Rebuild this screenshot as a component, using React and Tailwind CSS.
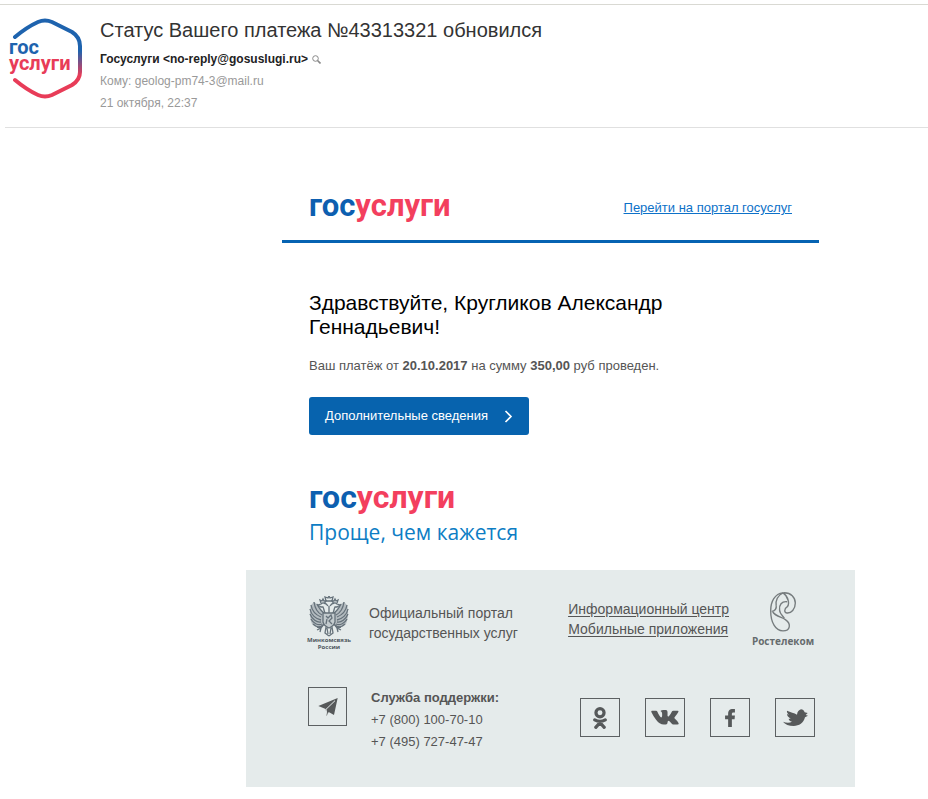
function OkIcon() {
  return (
    <svg width="14" height="22" viewBox="0 0 41 65" fill="none" stroke="#56595a" strokeWidth="9.5" strokeLinecap="round" strokeLinejoin="round">
      <circle cx="20.5" cy="17" r="12" />
      <path d="M5 38 Q20.5 47 36 38 M8 60 L20.5 46 L33 60" />
    </svg>
  );
}

function VkIcon() {
  return (
    <svg width="28" height="15" viewBox="0 0 83 44" fill="#56595a">
      <path d="M3 2 H15 Q18 2 19 5 Q25 19 30 22 Q33 22 33 17 V10 Q33 5 28 3 Q31 0 37 0 H45 Q49 1 49 6 V17 Q50 21 53 18 Q59 11 62 4 Q63 2 66 2 H79 Q83 2 81 6 Q78 12 70 21 Q68 23 71 26 Q80 34 82 39 Q83 43 78 43 H66 Q63 43 61 40 Q55 33 52 32 Q49 32 49 37 Q49 43 44 43 H38 Q25 43 15 29 Q6 17 1 6 Q0 2 3 2 Z" />
    </svg>
  );
}

function FacebookIcon() {
  return (
    <svg width="10" height="18" viewBox="0 0 29 53" fill="#56595a">
      <path d="M9 53 V30 H0 V19 H9 V14 C9 4 15 0 22 0 H29 V10 H25 C21 10 20 12 20 15 V19 H29 L28 30 H20 V53 Z" />
    </svg>
  );
}

function TwitterIcon() {
  return (
    <svg width="25" height="17" viewBox="0 0 75 51" fill="#56595a">
      <path d="M54 1 C59 1 63 5 65 10 L74 12 L68 18 L75 20 L66 25 C62 42 48 51 32 51 C18 51 6 46 0 38 C10 42 20 42 27 38 C20 36 17 32 17 29 L23 29 C16 25 12 20 12 15 L18 17 C13 13 11 8 12 5 C22 9 34 12 42 17 C43 8 48 3 54 1 Z" />
    </svg>
  );
}

const socials = [
  { name: "Одноклассники", Icon: OkIcon },
  { name: "ВКонтакте", Icon: VkIcon },
  { name: "Facebook", Icon: FacebookIcon },
  { name: "Twitter", Icon: TwitterIcon },
];

function Avatar() {
  return (
    <div className="relative shrink-0 font-[Roboto,sans-serif] text-xl leading-4 font-bold">
      <svg width="76" height="82" viewBox="0 0 76 82">
        <defs>
          <linearGradient id="ring" x1="0" y1="0" x2="0" y2="82" gradientUnits="userSpaceOnUse">
            <stop offset="0.4" stopColor="#1e63ae" />
            <stop offset="0.7" stopColor="#e83c58" />
          </linearGradient>
        </defs>
        <path
          d="M6 19 Q18 9 29 4 Q36 1 43 4 L63 14 Q71 19 71 28 V54 Q71 62 63 67 L43 77 Q36 80 29 77 Q18 72 6 62"
          fill="none"
          stroke="url(#ring)"
          strokeWidth="4"
          strokeLinecap="round"
        />
      </svg>
      <div className="absolute top-[21px] left-0">
        <div className="text-[#1e63ae]">гос</div>
        <div className="text-[#e83c58]">услуги</div>
      </div>
    </div>
  );
}

function Logo({ className }) {
  return (
    <div className={`font-[Roboto,sans-serif] font-bold text-[#0d5fb0] ${className}`}>
      гос<span className="text-[#f33f5e]">услуги</span>
    </div>
  );
}

function EagleHalf() {
  return (
    <g>
      <path d="M8 8 C11 12 14 15 16 18 L15 28 C11 31 6 31 3 28 C1 23 0 16 2 9 L5 6 Z" fill="#b4bcc0" stroke="none" />
      <path d="M19 10 C17 7 14 6 12 8 L9 9 L12 11 L14 11 C15 13 15 15 16 17 L19 18" />
      <path d="M15 17 C12 15 10 12 8 8 M13 19 C9 17 6 13 5 6 M12 21 C7 19 3 15 2 9 M12 24 C7 23 2 19 1 13 M12 26 C8 27 3 23 1 18 M13 28 C9 30 4 27 2 23 M14 29 C11 32 7 31 4 28" />
      <path d="M15 28 L12 32 L8 34 M12 32 L11 36 M12 32 L8 31 M17 31 L16 37 L20 40 M18 32 L19 38 M12 7 L11 4 L13 5 L14 3 L15 5 L17 5 L15 8" />
    </g>
  );
}

function Emblem() {
  return (
    <div className="w-11 shrink-0 text-center font-['Open_Sans',sans-serif] text-[6px] leading-[7px] font-bold text-[#4f585f]">
      <svg width="42" height="41" viewBox="0 0 40 41" fill="none" stroke="#65717a" strokeWidth="1.3" className="mx-auto">
        <EagleHalf />
        <g transform="translate(40 0) scale(-1 1)">
          <EagleHalf />
        </g>
        <path d="M17 5 L16 1 L19 2 L20 0 L21 2 L24 1 L23 5 Z" />
        <path d="M14 17 H26 V26 Q25 30 20 32 Q15 30 14 26 Z" fill="#c3cbce" />
        <path d="M17 20 L19 22 L22 19 L23 22 L20 25 L23 28 M18 23 L17 28 M20 10 V17" />
      </svg>
      <div>Минкомсвязь</div>
      <div>России</div>
    </div>
  );
}

function Rostelecom() {
  return (
    <div className="w-16 text-center font-['Open_Sans',sans-serif] text-[10px] leading-3 font-bold text-[#666c6e]">
      <svg width="26" height="40" viewBox="0 0 76 116" fill="none" stroke="#767c7e" strokeWidth="4" className="mx-auto mb-[3px]">
        <path d="M38 2 C14 4 2 28 2 54 C2 88 16 113 38 113 C60 113 62 92 46 81 C34 72 18 72 8 58" />
        <path d="M38 2 C62 0 74 16 74 32 C74 50 62 62 50 61 C40 60 42 48 50 43 C58 36 54 12 38 2" />
        <path d="M38 2 C22 8 16 26 18 38 C20 48 14 56 5 56" />
        <path d="M50 28 C34 26 26 38 28 52 C28 62 36 68 42 76" />
      </svg>
      Ростелеком
    </div>
  );
}

function App() {
  return (
    <div className="min-h-screen bg-white pt-1 font-['Liberation_Sans',sans-serif]">
      <header className="border-t border-[#d9d9d3]">
        <div className="ml-[5px] flex h-[123px] gap-[15px] border-b border-[#e0e0e0] pt-[13px] pl-1">
          <Avatar />
          <div className="text-xs leading-[22px] text-[#999]">
            <h1 className="mb-[6px] text-xl leading-6 text-[#333]">Статус Вашего платежа №43313321 обновился</h1>
            <div className="flex items-center gap-1 font-bold text-[#222]">
              Госуслуги &lt;no-reply@gosuslugi.ru&gt;
              <button aria-label="Найти письма">
                <svg width="9" height="9" viewBox="0 0 9 9" fill="none" stroke="#888">
                  <circle cx="3.5" cy="3.5" r="2.8" />
                  <path d="M5.5 5.5 L8.5 8.5" strokeWidth="1.6" />
                </svg>
              </button>
            </div>
            <div>Кому: geolog-pm74-3@mail.ru</div>
            <div>21 октября, 22:37</div>
          </div>
        </div>
      </header>

      <main className="ml-[173px] pt-[60px]">
        <div className="mx-auto max-w-[609px]">
          <div className="mx-9 flex h-[55px] justify-between border-b-3 border-[#0663b2] px-[27px]">
            <Logo className="text-[31px] leading-9" />
            <a href="#portal" className="mt-3 text-[13px] leading-4 text-[#0d71c8] underline">
              Перейти на портал госуслуг
            </a>
          </div>

          <section className="px-[63px] pt-12">
            <h2 className="max-w-[400px] text-[21px] leading-6 text-black">Здравствуйте, Кругликов Александр Геннадьевич!</h2>
            <p className="mt-[17px] text-[13px] leading-5 text-[#555]">
              Ваш платёж от <b>20.10.2017</b> на сумму <b>350,00</b> руб проведен.
            </p>
            <button className="mt-[21px] flex h-[38px] w-[220px] items-center justify-between rounded-[3px] bg-[#0763ae] px-4 text-[13px] whitespace-nowrap text-white">
              Дополнительные сведения
              <svg width="9" height="13" viewBox="0 0 9 13" fill="none" stroke="white" strokeWidth="1.6">
                <path d="M1.5 1 L7 6.5 L1.5 12" />
              </svg>
            </button>
            <Logo className="mt-[43px] text-[32px] leading-[38px]" />
            <p className="font-['Open_Sans',sans-serif] text-[21px] leading-8 text-[#0d7dc4]">Проще, чем кажется</p>
          </section>

          <footer className="mt-[22px] h-[217px] bg-[#e5ebeb] pt-[22px] pr-10 pl-[61px] text-[#555]">
            <div className="flex justify-between">
              <div className="flex gap-[18px] pt-1">
                <Emblem />
                <div className="pt-[7px] text-sm leading-5">
                  Официальный портал
                  <br />
                  государственных услуг
                </div>
              </div>
              <div className="flex gap-[22px]">
                <div className="flex flex-col pt-[7px] text-sm leading-5 underline underline-offset-2">
                  <a href="#info">Информационный центр</a>
                  <a href="#apps">Мобильные приложения</a>
                </div>
                <Rostelecom />
              </div>
            </div>

            <div className="mt-9 flex justify-between">
              <div className="flex gap-6">
                <a href="#support" aria-label="Служба поддержки" className="ml-px flex size-[39px] items-center justify-center border border-[#5c6062]">
                  <svg width="20" height="18" viewBox="0 0 58 54" fill="#56595a">
                    <path d="M58 0 L47 51 L31 42 L25 54 L22 33 L0 24 Z" />
                    <path d="M50 8 L23 34 L26 50" fill="none" stroke="#e5ebeb" strokeWidth="3" />
                  </svg>
                </a>
                <div className="text-[13px] leading-[22px]">
                  <b>Служба поддержки:</b>
                  <div>+7 (800) 100-70-10</div>
                  <div>+7 (495) 727-47-47</div>
                </div>
              </div>
              <div className="flex gap-[25px] pt-[11px]">
                {socials.map(({ name, Icon }) => (
                  <a key={name} href="#social" aria-label={name} className="flex h-[39px] w-10 items-center justify-center border border-[#5c6062]">
                    <Icon />
                  </a>
                ))}
              </div>
            </div>
          </footer>
        </div>
      </main>
    </div>
  );
}

export default App;
